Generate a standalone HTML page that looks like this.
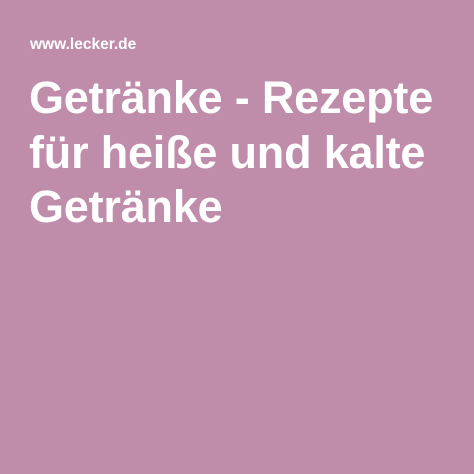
<!DOCTYPE html>
<html><head><style>
html,body{margin:0;padding:0;}
body{width:474px;height:474px;background:#bf8ca9;overflow:hidden;font-family:"Liberation Sans",Arial,sans-serif;color:#fff;position:relative;}
.u{position:absolute;left:30px;top:36px;font-size:15.5px;font-weight:bold;}
.t{position:absolute;left:29px;top:71px;font-size:45px;font-weight:bold;line-height:54.5px;letter-spacing:-0.2px;}
</style></head><body>
<div class="u">www.lecker.de</div>
<div class="t">Getränke - Rezepte<br>für heiße und kalte<br>Getränke</div>
</body></html>
